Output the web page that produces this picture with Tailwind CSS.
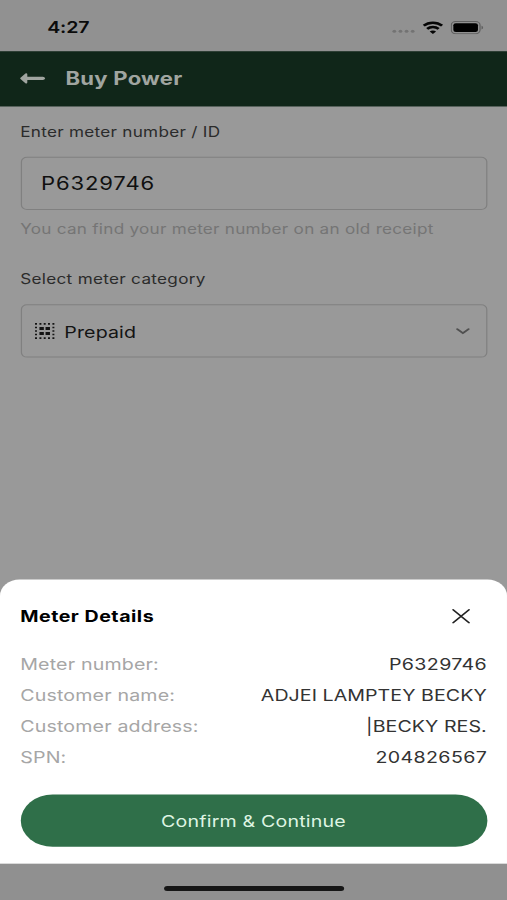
<!DOCTYPE html>
<html lang="en">
<head>
  <meta charset="UTF-8">
  <title>Buy Power</title>
  <script src="https://cdn.jsdelivr.net/npm/@tailwindcss/browser@4"></script>
</head>
<body class="w-[507px] h-[900px] overflow-hidden bg-[#999999] font-['Inter',sans-serif]">
  <!-- 414x896 phone screen stretched to fill the window -->
  <div class="w-[414px] h-[896px] origin-top-left scale-x-[1.2246] scale-y-[1.0045] flex flex-col bg-[#999999]">

    <!-- status bar -->
    <div class="h-[50.8px] shrink-0 bg-[#919191] flex items-center justify-between pl-[38.5px] pr-[19px] pt-[3.5px]">
      <span class="text-[16px] font-semibold text-[#0b0b0b] tracking-[-0.1px]">4:27</span>
      <div class="flex items-center">
        <svg class="w-[19px] h-[4px] mt-[8px] mr-[6px]" viewBox="0 0 19 4" fill="#737373">
          <circle cx="2" cy="2" r="1.5"/><circle cx="7" cy="2" r="1.5"/><circle cx="12" cy="2" r="1.5"/><circle cx="17" cy="2" r="1.5"/>
        </svg>
        <svg class="w-[17px] h-[13px] mr-[6px]" viewBox="0 0 17 13" fill="none" stroke="#050505" stroke-width="2.4">
          <path d="M1 4.6C5.2.6 11.8.6 16 4.6"/>
          <path d="M3.8 7.8c2.7-2.5 6.7-2.5 9.4 0"/>
          <path d="M8.5 12.8 5.9 10.3c1.5-1.3 3.7-1.3 5.2 0z" fill="#050505" stroke="none"/>
        </svg>
        <svg class="w-[27px] h-[13px]" viewBox="0 0 27 13">
          <rect x=".5" y=".5" width="23.5" height="12" rx="3.6" fill="none" stroke="#606060"/>
          <rect x="2.2" y="2.2" width="20.1" height="8.6" rx="2" fill="#000"/>
          <path d="M25.2 4.6v3.8c.8-.3 1.3-1 1.3-1.9s-.5-1.6-1.3-1.9z" fill="#606060"/>
        </svg>
      </div>
    </div>

    <!-- header -->
    <div class="h-[55px] shrink-0 bg-[#102619] flex items-center pl-[16px]">
      <svg class="w-[21px] h-[12px] mr-[16.5px]" viewBox="0 0 21 12" fill="#a0a5a0" stroke="#a0a5a0" stroke-linecap="round" stroke-linejoin="round">
        <path d="M5.4 1.8 1.4 6l4 4.2z" stroke-width="1.8"/>
        <path d="M5 6h14" stroke-width="3.4"/>
      </svg>
      <h1 class="text-[18px] font-bold text-[#a0a5a0] tracking-[0.2px]">Buy Power</h1>
    </div>

    <!-- form -->
    <div class="grow px-[16.5px] pt-[15px]">
      <label class="block h-[20px] leading-[20px] text-[14px] tracking-[0.22px] text-[#2b2b2b]">Enter meter number / ID</label>
      <div class="mt-[15px] h-[53.5px] flex items-center pl-[16px] rounded-[5px] border border-[#808080] text-[18px] tracking-[0.7px] text-[#101010]">P6329746</div>
      <p class="mt-[9px] h-[20px] leading-[20px] text-[14px] tracking-[0.2px] text-[#757575] whitespace-nowrap">You can find your meter number on an old receipt</p>
      <label class="block mt-[30px] h-[20px] leading-[20px] text-[14px] tracking-[0.24px] text-[#2b2b2b]">Select meter category</label>
      <div class="mt-[14.5px] h-[53.5px] flex items-center pl-[10.5px] pr-[13px] rounded-[5px] border border-[#808080]">
        <svg class="w-[17px] h-[17px] mr-[7.5px]" viewBox="0 0 17 17" fill="#141414">
          <path d="M.6.6h1.6v1.6H.6zM4.2.6h1.6v1.6H4.2zM7.7.6h1.6v1.6H7.7zM11.2.6h1.6v1.6h-1.6zM14.8.6h1.6v1.6h-1.6zM.6 4.2h1.6v1.6H.6zM14.8 4.2h1.6v1.6h-1.6zM.6 7.7h1.6v1.6H.6zM14.8 7.7h1.6v1.6h-1.6zM.6 11.2h1.6v1.6H.6zM14.8 11.2h1.6v1.6h-1.6zM.6 14.8h1.6v1.6H.6zM4.2 14.8h1.6v1.6H4.2zM7.7 14.8h1.6v1.6H7.7zM11.2 14.8h1.6v1.6h-1.6zM14.8 14.8h1.6v1.6h-1.6z"/>
          <path d="M4.2 4.5h3.6v3.1H4.2zM9.2 4.5h3.6v3.1H9.2zM4.2 9.4h3.6v3.1H4.2zM9.2 9.4h3.6v3.1H9.2z"/>
        </svg>
        <span class="grow text-[16px] tracking-[0.1px] text-[#141414]">Prepaid</span>
        <svg class="w-[12px] h-[8px]" viewBox="0 0 12 8" fill="none" stroke="#505050" stroke-width="1.8" stroke-linecap="round" stroke-linejoin="round">
          <path d="m1.4 1.7 4.6 4 4.6-4"/>
        </svg>
      </div>
    </div>

    <!-- bottom sheet -->
    <div class="h-[283.5px] shrink-0 bg-white rounded-t-[16px] px-[16.5px] pt-[24.5px]">
      <div class="flex items-center justify-between h-[24px] pr-[14px]">
        <h2 class="text-[16px] font-bold tracking-[0.42px] text-black">Meter Details</h2>
        <svg class="w-[15px] h-[15px]" viewBox="0 0 15 15" fill="none" stroke="#222" stroke-width="1.5" stroke-linecap="round">
          <path d="m1 1 13 13M14 1 1 14"/>
        </svg>
      </div>
      <div class="mt-[20.5px] text-[16px] leading-[31.2px] text-[#333] whitespace-nowrap">
        <div class="flex justify-between"><span class="tracking-[0.14px] text-[#a6a6a6]">Meter number:</span><span class="tracking-[0.3px] -mr-[0.3px]">P6329746</span></div>
        <div class="flex justify-between"><span class="tracking-[0.14px] text-[#a6a6a6]">Customer name:</span><span class="tracking-[0.05px]">ADJEI LAMPTEY BECKY</span></div>
        <div class="flex justify-between"><span class="tracking-[0.14px] text-[#a6a6a6]">Customer address:</span><span class="tracking-[0.05px]">|BECKY RES.</span></div>
        <div class="flex justify-between"><span class="tracking-[0.14px] text-[#a6a6a6]">SPN:</span><span class="tracking-[0.3px] -mr-[0.3px]">204826567</span></div>
      </div>
      <button class="mt-[20.5px] w-full h-[52.5px] rounded-full bg-[#2f6f49] text-[16px] tracking-[0.15px] text-[#dff5e3]">Confirm &amp; Continue</button>
    </div>

    <!-- home indicator -->
    <div class="h-[36px] shrink-0 bg-[#909090] flex justify-center pt-[22px]">
      <div class="w-[147px] h-[5px] rounded-full bg-[#161616]"></div>
    </div>
  </div>
</body>
</html>
